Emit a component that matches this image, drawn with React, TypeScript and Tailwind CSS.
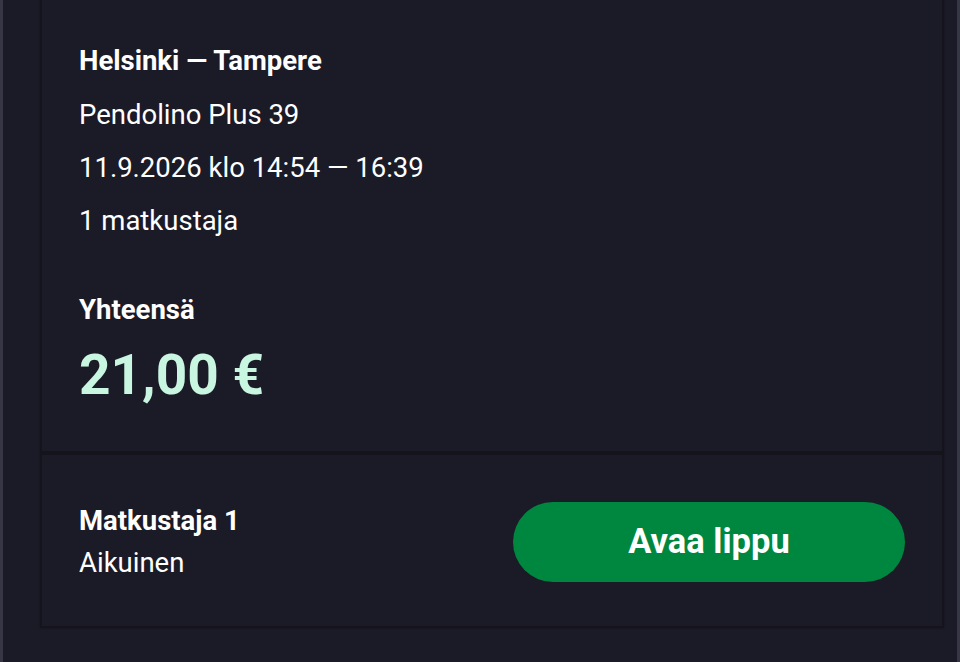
import React from "react";

export default function App() {
  return (
    <div
      className="flex h-[662px] w-[960px] overflow-hidden bg-[#1b1a27] text-white"
      style={{ fontFamily: "Roboto, 'Noto Sans', sans-serif" }}
    >
      <div className="w-[3px] shrink-0 bg-[#363645]" />
      <div className="flex-1 pl-[37px] pr-[13px]">
        <div className="flex flex-col border-x-2 border-b-2 border-[#15141d] bg-[#1b1a27] shadow-[0_0_2px_rgba(0,0,0,0.3)]">
          <div className="flex flex-col px-[37px] pt-[44px] pb-[46px]">
            <div className="text-[27.5px] font-bold leading-[34px]">Helsinki — Tampere</div>
            <div className="mt-[20px] text-[27.5px] leading-[34px]">Pendolino Plus 39</div>
            <div className="mt-[19px] text-[27.5px] leading-[34px]">11.9.2026 klo 14:54 — 16:39</div>
            <div className="mt-[19px] text-[27.5px] leading-[34px]">1 matkustaja</div>
            <div className="mt-[55px] text-[27.5px] font-bold leading-[34px]">Yhteensä</div>
            <div className="mt-[18px] text-[55px] font-bold leading-[60px] text-[#c8f6e0]">21,00 €</div>
          </div>
          <div className="h-[4px] bg-[#15141d]" />
          <div className="flex items-center justify-between pl-[37px] pr-[37px] pt-[45px] pb-[42px]">
            <div className="flex flex-col">
              <div className="text-[27.5px] font-bold leading-[42px]">Matkustaja 1</div>
              <div className="text-[27.5px] leading-[42px]">Aikuinen</div>
            </div>
            <button className="flex h-[80px] w-[392px] items-center justify-center rounded-full bg-[#00873f] text-[34.5px] font-bold text-white">
              Avaa lippu
            </button>
          </div>
        </div>
      </div>
      <div className="w-[3px] shrink-0 bg-[#363645]" />
    </div>
  );
}
